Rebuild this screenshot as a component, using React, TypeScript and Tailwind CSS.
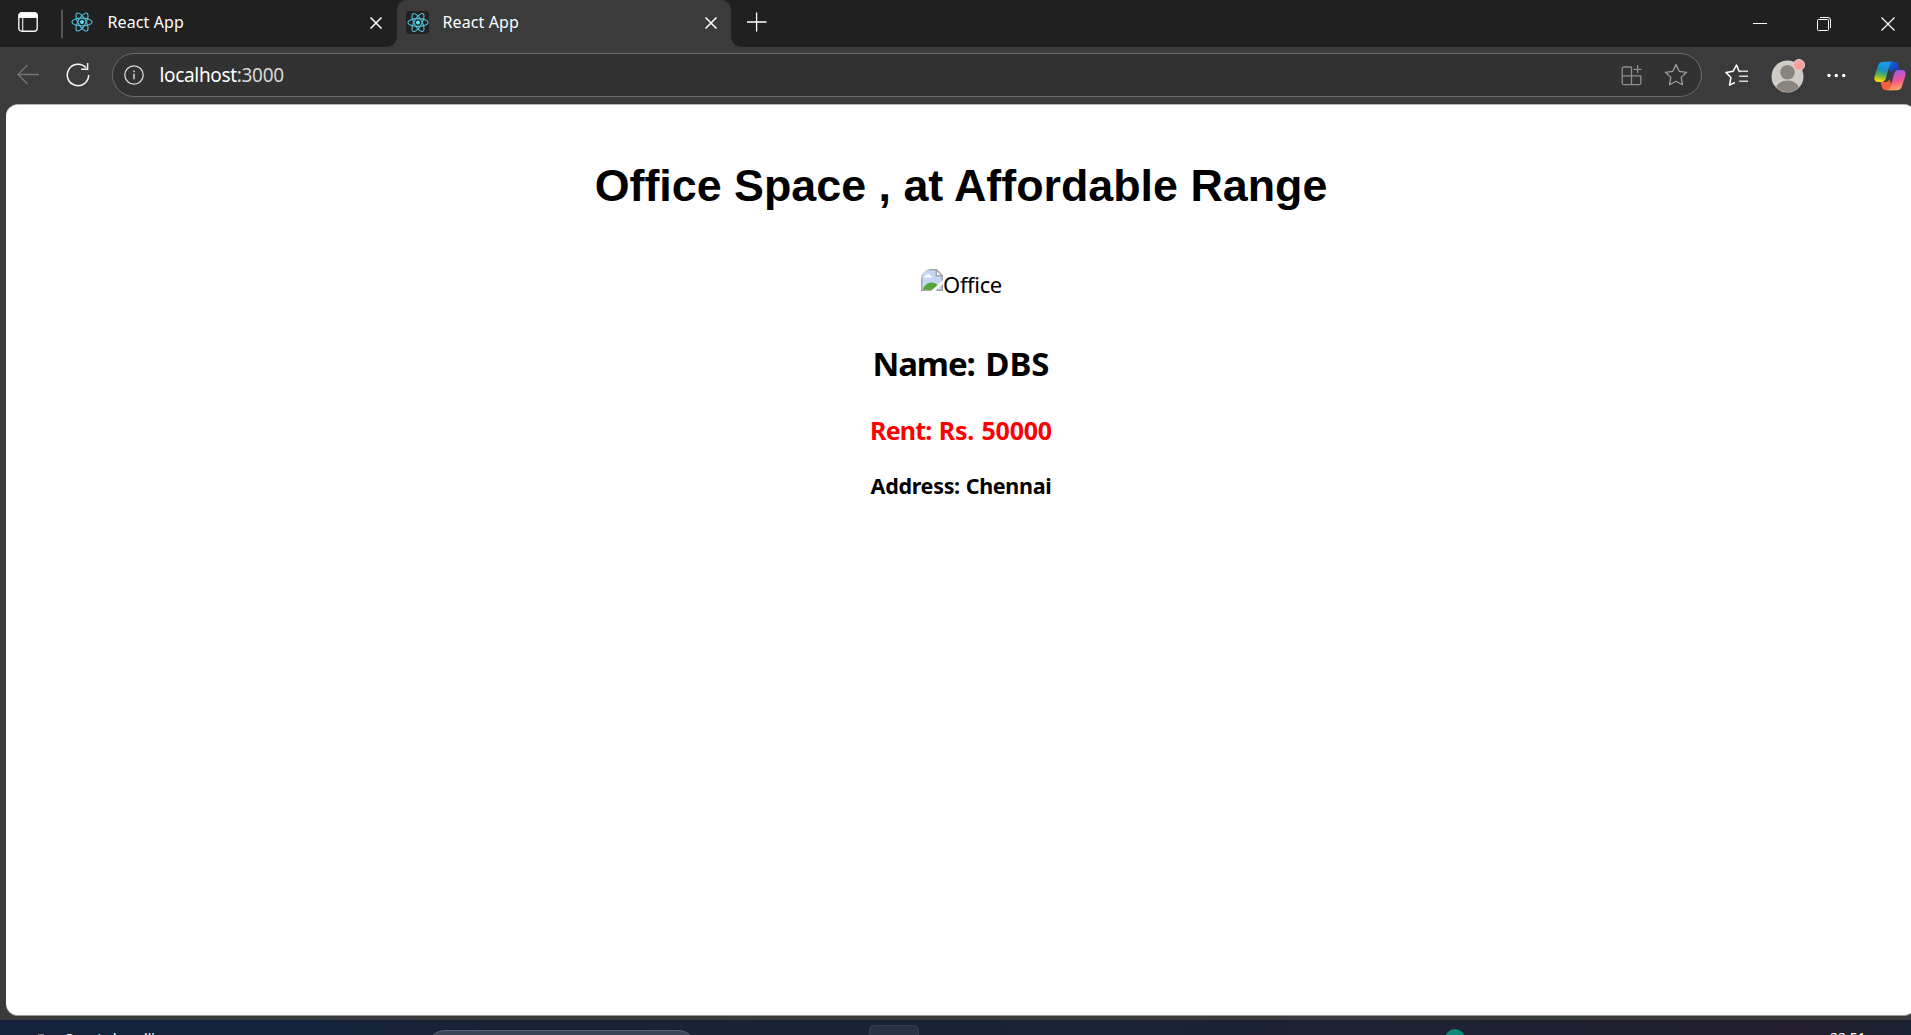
import React from 'react';

function ReactLogo({ className = '' }: { className?: string }) {
  return (
    <svg viewBox="-11.5 -10.5 23 21" className={className} fill="none" stroke="#53c1de" strokeWidth="1.15">
      <circle r="2.1" fill="#61dafb" stroke="none" />
      <ellipse rx="10.6" ry="4" />
      <ellipse rx="10.6" ry="4" transform="rotate(60)" />
      <ellipse rx="10.6" ry="4" transform="rotate(120)" />
    </svg>
  );
}

function CloseIcon({ size, width = 1.5 }: { size: number; width?: number }) {
  return (
    <svg width={size} height={size} viewBox={`0 0 ${size} ${size}`} className="shrink-0" stroke="#fff" strokeWidth={width}>
      <path d={`M.5 .5L${size - 0.5} ${size - 0.5}M${size - 0.5} .5L.5 ${size - 0.5}`} />
    </svg>
  );
}

function TabStrip() {
  return (
    <div className="flex h-[47px] shrink-0 bg-[#202020]">
      <div className="flex w-[61px] pl-[18px] pt-3">
        <svg width="20" height="20" viewBox="0 0 20 20" fill="none" stroke="#f2f2f2" strokeWidth="1.4">
          <rect x="0.8" y="0.8" width="18.4" height="18.4" rx="3" />
          <path d="M1 3.5a2.5 2.5 0 0 1 2.5-2.5h13a2.5 2.5 0 0 1 2.5 2.5v1.700H1z" fill="#fff" />
          <path d="M4.7 6v13" strokeWidth="1.1" />
        </svg>
      </div>
      <div className="mt-2.5 h-7 w-0.5 bg-[#565656]" />
      <div className="flex w-[334px] pl-2">
        <ReactLogo className="mt-[11px] h-[22px] w-[22px]" />
        <span className="mt-[10px] ml-[14.5px] w-[262px] text-[16px] leading-6 tracking-[0.1px] whitespace-nowrap text-white">React App</span>
        <div className="mt-[17px] ml-[0.5px]"><CloseIcon size={12} /></div>
      </div>
      <div className="relative flex h-[47px] w-[334px] rounded-t-[10px] bg-[#3b3b3b] pl-[9px]">
        <div className="absolute -left-[10px] bottom-0 h-[10px] w-[10px] bg-[radial-gradient(circle_at_0_0,#202020_9.5px,#3b3b3b_10px)]" />
        <div className="absolute -right-[10px] bottom-0 h-[10px] w-[10px] bg-[radial-gradient(circle_at_100%_0,#202020_9.5px,#3b3b3b_10px)]" />
        <div className="mt-[11px] flex h-[23px] w-[23px] items-center justify-center rounded-[3px] bg-[#222222]">
          <ReactLogo className="h-[21px] w-[22px]" />
        </div>
        <span className="mt-[10px] ml-[13.5px] w-[262px] text-[16px] leading-6 tracking-[0.1px] whitespace-nowrap text-white">React App</span>
        <div className="mt-[17px]"><CloseIcon size={12} /></div>
      </div>
      <svg width="20" height="20" viewBox="0 0 20 20" className="mt-3 ml-4" stroke="#fff" strokeWidth="1.3">
        <path d="M0 10h19.5M9.6 .5v19" />
      </svg>
      <div className="ml-auto flex w-[158px] items-center justify-between pr-[16px]">
        <div className="h-px w-[14px] bg-white" />
        <svg width="14" height="14" viewBox="0 0 14 14" fill="none" stroke="#fff" strokeWidth="1">
          <rect x="0.5" y="2.5" width="11" height="11" rx="1" />
          <path d="M3 .5h8a2.5 2.5 0 0 1 2.5 2.5v8" />
        </svg>
        <CloseIcon size={14} width={1.1} />
      </div>
    </div>
  );
}

const FOLD = 'M12 .8h8c2 0 3.5 1.1 4 3L25.5 9h-5c-2 0-3.3 1-3.800 3z';
const RIBBON =
  'M9.5.8h9.500c-1.800.3-2.900 1.400-3.500 3.400L12 17c-.8 2.700-2.200 4-4.700 4H4C1 21-.2 18.600.6 15.600L4 4.700C4.800 2.200 6.500.8 9.500.8z';

function Copilot() {
  return (
    <svg width="32" height="30" viewBox="0 0 32 30">
      <defs>
        <linearGradient id="cool" x1="0.5" y1="0" x2="0.3" y2="1">
          <stop offset="0.1" stopColor="#169bee" />
          <stop offset="0.4" stopColor="#1d8fc0" />
          <stop offset="0.65" stopColor="#58b155" />
          <stop offset="0.95" stopColor="#f7d600" />
        </linearGradient>
        <linearGradient id="warm" x1="0.5" y1="1" x2="0.3" y2="0">
          <stop offset="0.05" stopColor="#a557ee" />
          <stop offset="0.5" stopColor="#ee5490" />
          <stop offset="0.95" stopColor="#ffa65c" />
        </linearGradient>
        <linearGradient id="navy" x1="0" y1="0" x2="1" y2="1">
          <stop offset="0.2" stopColor="#1d62dd" />
          <stop offset="0.8" stopColor="#1540b8" />
        </linearGradient>
      </defs>
      <path d={FOLD} fill="url(#navy)" />
      <path d={FOLD} fill="#ef6136" transform="rotate(180 16 15)" />
      <path d={RIBBON} fill="url(#cool)" />
      <path d={RIBBON} fill="url(#warm)" transform="rotate(180 16 15)" />
    </svg>
  );
}

function Toolbar() {
  return (
    <div className="flex h-[57px] shrink-0 bg-[#3b3b3b] pt-1.5">
      <div className="flex h-11 w-[112px] items-center pl-[17px]">
        <svg width="22" height="20" viewBox="0 0 22 20" fill="none" stroke="#757575" strokeWidth="1.4">
          <path d="M22 9.500H1M10.500 0L1 9.500l9.500 9.500" />
        </svg>
        <svg width="24" height="24" viewBox="0 0 24 24" fill="none" stroke="#f5f5f5" strokeWidth="1.5" className="ml-[27px]">
          <path d="M22.700 12A10.700 10.700 0 1 1 19.900 4.800" />
          <path d="M21.600 0v6.300h-6.400" />
        </svg>
      </div>
      <div className="flex h-11 w-[1590px] items-center rounded-full border border-[#6b6b6b] bg-[#323232] pl-[11px]">
        <svg width="20" height="20" viewBox="0 0 20 20" fill="none" stroke="#d6d6d6" strokeWidth="1.3">
          <circle cx="10" cy="10" r="9.200" />
          <path d="M10 8.700v5.500" strokeWidth="1.500" />
          <circle cx="10" cy="6.300" r=".9" fill="#d6d6d6" stroke="none" />
        </svg>
        <span className="ml-[15.5px] text-[19px] leading-7 tracking-[-0.33px] whitespace-nowrap text-white">
          localhost<span className="text-[#d8d8d8]">:3000</span>
        </span>
        <svg width="22" height="21" viewBox="0 0 22 21" fill="none" stroke="#8e8e8e" strokeWidth="1.3" className="ml-auto">
          <path d="M10.500 2H2.700A1.500 1.500 0 0 0 1.200 3.500v14.700a1.500 1.500 0 0 0 1.500 1.500h15.600a1.500 1.500 0 0 0 1.500-1.500v-7.300H1.200M10.500 2v17.500M16.600 .300v8M12.600 4.300h8" />
        </svg>
        <svg width="24" height="24" viewBox="0 0 24 24" fill="none" stroke="#9b9b9b" strokeWidth="1.300" strokeLinejoin="round" className="mr-[13px] ml-[21px]">
          <path d="M12 1.600l3.200 6.700 7.400 1-5.400 5.100 1.300 7.300-6.500-3.500-6.500 3.500 1.300-7.300-5.400-5.100 7.400-1z" />
        </svg>
      </div>
      <div className="flex h-11 items-center pl-[22.5px]">
        <svg width="24" height="24" viewBox="0 0 24 24" fill="none" stroke="#fff" strokeWidth="1.500" strokeLinejoin="round">
          <path d="M15.800 8.500l-1.800-.3L11.500 2 8.200 8.200.9 9.400l5 5.100-1.400 7.700 5.300-2.700" />
          <path d="M14.200 8.200h8.800M14.200 13.300h8.800M14.200 18.200h8.800" stroke="#d8d8d8" />
        </svg>
        <div className="relative mt-[2px] ml-[22px] h-[33px] w-[33px]">
          <svg width="33" height="33" viewBox="0 0 33 33">
            <defs><clipPath id="face"><circle cx="16.500" cy="16.500" r="15.500" /></clipPath></defs>
            <circle cx="16.500" cy="16.500" r="16" fill="#cfccc8" />
            <circle cx="16.500" cy="12.300" r="7.300" fill="#898480" />
            <ellipse cx="16.500" cy="29" rx="11.500" ry="8.500" fill="#898480" clipPath="url(#face)" />
          </svg>
          <div className="absolute -top-px -right-px h-[12px] w-[12px] rounded-full border border-[#dddad7] bg-[#fb9f9b]" />
        </div>
        <svg width="19" height="5" viewBox="0 0 19 5" fill="#fff" className="mt-px ml-[23.5px]">
          <circle cx="2" cy="2.500" r="1.700" /><circle cx="9.300" cy="2.500" r="1.700" /><circle cx="16.700" cy="2.500" r="1.700" />
        </svg>
        <div className="mt-px ml-[28px] shrink-0"><Copilot /></div>
      </div>
    </div>
  );
}

function BrokenImage() {
  return (
    <svg width="22" height="22" viewBox="0 0 22 22">
      <defs><clipPath id="corner"><path d="M0 10A10 10 0 0 1 10 0h12v22H0z" /></clipPath></defs>
      <g clipPath="url(#corner)">
        <path d="M.7.700h14.600l6 6V21.300H.7z" fill="#c5d6f5" stroke="#a3a3a3" strokeWidth="1.400" />
        <path d="M3 8.500c0-1.600 1.200-2.200 2.200-2 .4-1.700 3.400-1.700 3.900 0 1.400 0 2.100.8 2.100 2z" fill="#fff" />
        <path d="M2.400 20.700v-1.700C4.500 14.800 8 13.200 11.500 13.400c2.500.3 4 1.500 5.500 3.300v4z" fill="#52a837" />
        <path d="M15.300.700v6h6z" fill="#fff" stroke="#a3a3a3" strokeWidth="1.400" />
        <path d="M22 11v3.800L14.500 22H10z" fill="#fff" />
      </g>
    </svg>
  );
}

function Taskbar() {
  return (
    <div className="relative h-[15px] shrink-0 overflow-hidden bg-[linear-gradient(90deg,#14233b_0%,#13243c_15%,#1a2237_27%,#192338_50%,#1e2233_75%,#211f2f_90%,#241f2e_94%,#1b2233_100%)]">
      <span className="absolute top-[8px] left-[65px] text-[15px] leading-5 tracking-[-0.2px] whitespace-nowrap text-white">Sports headline</span>
      <div className="absolute top-[14px] left-[38px] h-px w-[6px] bg-[#77808e]" />
      <div className="absolute top-[10px] left-[427px] h-[36px] w-[269px] rounded-full border border-[#5b6678] bg-[#3a4358]" />
      <div className="absolute top-[5px] left-[869px] h-[48px] w-[50px] rounded-[5px] border border-[#343e52] bg-[#2a3247]" />
      <div className="absolute top-[9px] left-[1445px] h-[20px] w-[20px] rounded-full bg-[#0b8a7a]" />
      <span className="absolute top-[8px] left-[1830px] text-[14px] leading-5 whitespace-nowrap text-white">22:51</span>
    </div>
  );
}

export default function App() {
  return (
    <div className="flex h-[1035px] w-[1911px] flex-col overflow-hidden bg-[#3b3b3b] font-['Noto_Sans',sans-serif]">
      <TabStrip />
      <Toolbar />
      <main className="-mr-[5px] mb-[4px] ml-[6px] flex min-h-0 flex-1 flex-col items-center rounded-[12px] border-y border-t-[#b5b5b5] border-b-[#9a9a9a] bg-white text-black">
        <h1 className="mt-[55px] font-['Liberation_Sans',Arial,sans-serif] text-[44.8px] leading-[50px] font-bold whitespace-nowrap">
          Office Space , at Affordable Range
        </h1>
        <div className="mt-[59px] flex h-[30px] pl-px">
          <BrokenImage />
          <span className="text-[22px] leading-[30px] tracking-[-0.35px]">Office</span>
        </div>
        <h2 className="mt-[43px] text-[33px] leading-[44px] font-bold [word-spacing:2px]">
          <span className="tracking-[-1.1px]">Name:</span> DBS
        </h2>
        <h3 className="mt-[27px] text-[25px] leading-[34px] font-bold tracking-[-0.2px] text-[#ff0000] [word-spacing:1px]">
          <span className="tracking-[-0.8px]">Rent:</span> Rs. 50000
        </h3>
        <h4 className="mt-[24px] text-[21.5px] leading-[30px] font-bold tracking-[-0.3px] [word-spacing:0.5px]">Address: Chennai</h4>
      </main>
      <Taskbar />
    </div>
  );
}
